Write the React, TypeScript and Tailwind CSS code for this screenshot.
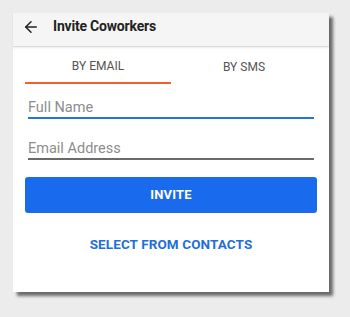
import { ArrowLeft } from "lucide-react";

export default function App() {
  return (
    <div className="w-[350px] h-[317px] bg-[#ececec] pt-[13px] pl-[13px]" style={{ fontFamily: "Roboto, 'Liberation Sans', sans-serif" }}>
      <div className="w-[316px] h-[279px] bg-white shadow-[4px_4px_3px_rgba(0,0,0,0.55)] flex flex-col">
        <div className="h-[34px] bg-[#f5f5f5] border-b border-[#dcdcdc] flex items-center pl-[9px] pb-[6px] shadow-[0_1px_2px_rgba(0,0,0,0.08)]">
          <ArrowLeft className="w-[18px] h-[18px] text-[#222]" strokeWidth={2} />
          <span className="ml-[13px] text-[14px] font-bold text-[#222] tracking-[-0.2px]">Invite Coworkers</span>
        </div>
        <div className="flex px-[12px] mt-[1px]">
          <div className="w-[146px] h-[36px] flex items-center justify-center text-[12px] text-[#555] border-b-2 border-[#f0622a] pt-[2px]">
            BY EMAIL
          </div>
          <div className="flex-1 h-[36px] flex items-center justify-center text-[12px] text-[#555] pt-[2px]">
            BY SMS
          </div>
        </div>
        <div className="px-[15px] mt-[12px]">
          <div className="h-[23px] pt-[3px] border-b-2 border-[#2774d6] text-[14.5px] text-[#8d8d8d] leading-[18px]">Full Name</div>
          <div className="h-[23px] pt-[3px] mt-[18px] border-b-2 border-[#6a6a6a] text-[14.5px] text-[#8d8d8d] leading-[18px]">Email Address</div>
        </div>
        <div className="px-[12px] mt-[17px]">
          <button className="w-full h-[36px] rounded-[3px] bg-[#1a6aee] text-white text-[13px] font-bold tracking-[0.2px]">INVITE</button>
        </div>
        <div className="mt-[21px] text-center text-[13.5px] font-bold text-[#1f6fd9] tracking-[0.1px]">SELECT FROM CONTACTS</div>
      </div>
    </div>
  );
}
